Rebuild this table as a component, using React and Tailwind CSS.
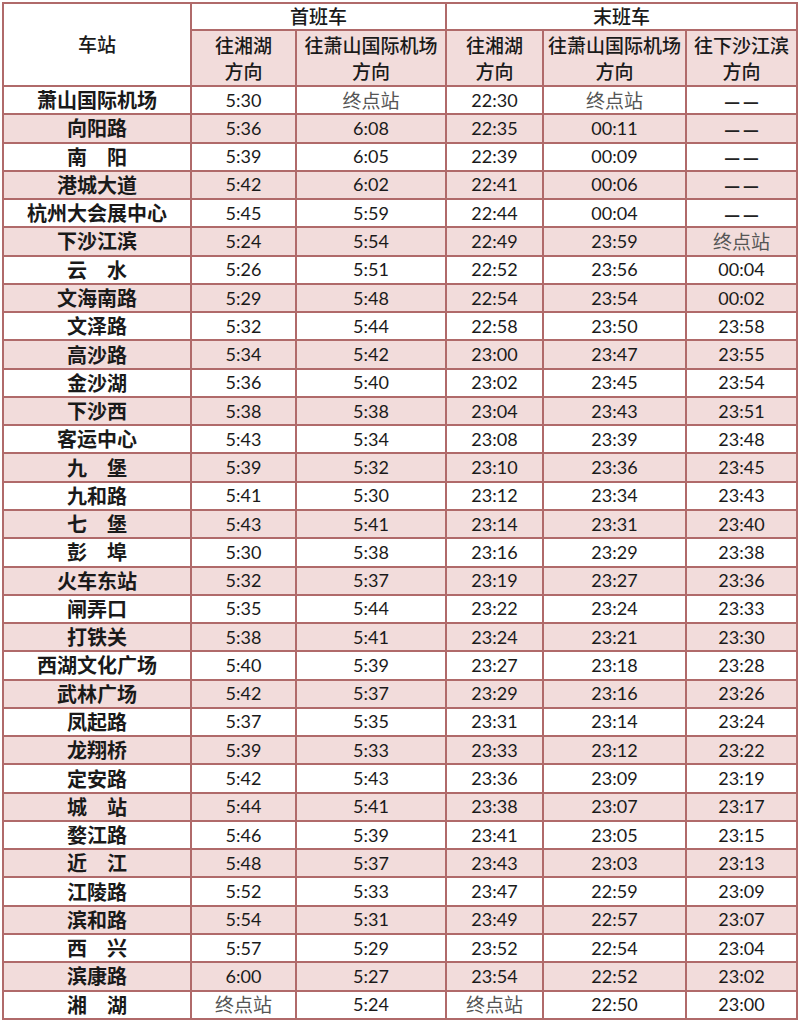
const rows = [
  ["萧山国际机场", "5:30", "终点站", "22:30", "终点站", "——"],
  ["向阳路", "5:36", "6:08", "22:35", "00:11", "——"],
  ["南\u3000阳", "5:39", "6:05", "22:39", "00:09", "——"],
  ["港城大道", "5:42", "6:02", "22:41", "00:06", "——"],
  ["杭州大会展中心", "5:45", "5:59", "22:44", "00:04", "——"],
  ["下沙江滨", "5:24", "5:54", "22:49", "23:59", "终点站"],
  ["云\u3000水", "5:26", "5:51", "22:52", "23:56", "00:04"],
  ["文海南路", "5:29", "5:48", "22:54", "23:54", "00:02"],
  ["文泽路", "5:32", "5:44", "22:58", "23:50", "23:58"],
  ["高沙路", "5:34", "5:42", "23:00", "23:47", "23:55"],
  ["金沙湖", "5:36", "5:40", "23:02", "23:45", "23:54"],
  ["下沙西", "5:38", "5:38", "23:04", "23:43", "23:51"],
  ["客运中心", "5:43", "5:34", "23:08", "23:39", "23:48"],
  ["九\u3000堡", "5:39", "5:32", "23:10", "23:36", "23:45"],
  ["九和路", "5:41", "5:30", "23:12", "23:34", "23:43"],
  ["七\u3000堡", "5:43", "5:41", "23:14", "23:31", "23:40"],
  ["彭\u3000埠", "5:30", "5:38", "23:16", "23:29", "23:38"],
  ["火车东站", "5:32", "5:37", "23:19", "23:27", "23:36"],
  ["闸弄口", "5:35", "5:44", "23:22", "23:24", "23:33"],
  ["打铁关", "5:38", "5:41", "23:24", "23:21", "23:30"],
  ["西湖文化广场", "5:40", "5:39", "23:27", "23:18", "23:28"],
  ["武林广场", "5:42", "5:37", "23:29", "23:16", "23:26"],
  ["凤起路", "5:37", "5:35", "23:31", "23:14", "23:24"],
  ["龙翔桥", "5:39", "5:33", "23:33", "23:12", "23:22"],
  ["定安路", "5:42", "5:43", "23:36", "23:09", "23:19"],
  ["城\u3000站", "5:44", "5:41", "23:38", "23:07", "23:17"],
  ["婺江路", "5:46", "5:39", "23:41", "23:05", "23:15"],
  ["近\u3000江", "5:48", "5:37", "23:43", "23:03", "23:13"],
  ["江陵路", "5:52", "5:33", "23:47", "22:59", "23:09"],
  ["滨和路", "5:54", "5:31", "23:49", "22:57", "23:07"],
  ["西\u3000兴", "5:57", "5:29", "23:52", "22:54", "23:04"],
  ["滨康路", "6:00", "5:27", "23:54", "22:52", "23:02"],
  ["湘\u3000湖", "终点站", "5:24", "终点站", "22:50", "23:00"],
];

const cjk = "font-['Noto_Sans_CJK_SC',sans-serif]";
const cell = "flex items-center justify-center border-r-2 border-b-2 border-[#b06a6a] text-[#1a1a1a]";

const Value = ({ text }) => {
  if (text === "终点站") {
    return <span className={`${cjk} text-[19px] font-normal text-[#555]`}>{text}</span>;
  }
  if (text === "——") {
    // the two dashes sit apart, as in the source sheet
    return (
      <span className="flex gap-[2px] font-['Lato',sans-serif] text-[21px] leading-none text-[#222] font-bold">
        <span>—</span>
        <span>—</span>
      </span>
    );
  }
  return <span className="font-['Lato',sans-serif] text-[18px]">{text}</span>;
};

const HeadTwo = ({ top }) => (
  <div className={`${cell} bg-[#f2dcdb] flex-col leading-[26px] ${cjk} text-[19px] font-medium`}>
    <span>{top}</span>
    <span>方向</span>
  </div>
);

export default function App() {
  return (
    <div className="bg-white min-h-[1022px] pl-[2px] pt-[2px]">
      <div className="grid grid-cols-[188px_105px_150px_97px_143px_111px] grid-rows-[27px_56px_repeat(33,28.27px)] w-fit border-l-2 border-t-2 border-[#b06a6a]">
        <div className={`${cell} row-span-2 bg-white ${cjk} text-[19px] font-medium`}>车站</div>
        <div className={`${cell} col-span-2 bg-white ${cjk} text-[19px] font-medium`}>首班车</div>
        <div className={`${cell} col-span-3 bg-white ${cjk} text-[19px] font-medium`}>末班车</div>
        <HeadTwo top="往湘湖" />
        <HeadTwo top="往萧山国际机场" />
        <HeadTwo top="往湘湖" />
        <HeadTwo top="往萧山国际机场" />
        <HeadTwo top="往下沙江滨" />
        {rows.map((r, i) => {
          const bg = i % 2 === 1 ? "bg-[#f2dcdb]" : "bg-white";
          return r.map((v, j) =>
            j === 0 ? (
              <div key={`${i}-${j}`} className={`${cell} ${bg} ${cjk} text-[20px] font-bold whitespace-pre`}>
                {v}
              </div>
            ) : (
              <div key={`${i}-${j}`} className={`${cell} ${bg}`}>
                <Value text={v} />
              </div>
            )
          );
        })}
      </div>
    </div>
  );
}
